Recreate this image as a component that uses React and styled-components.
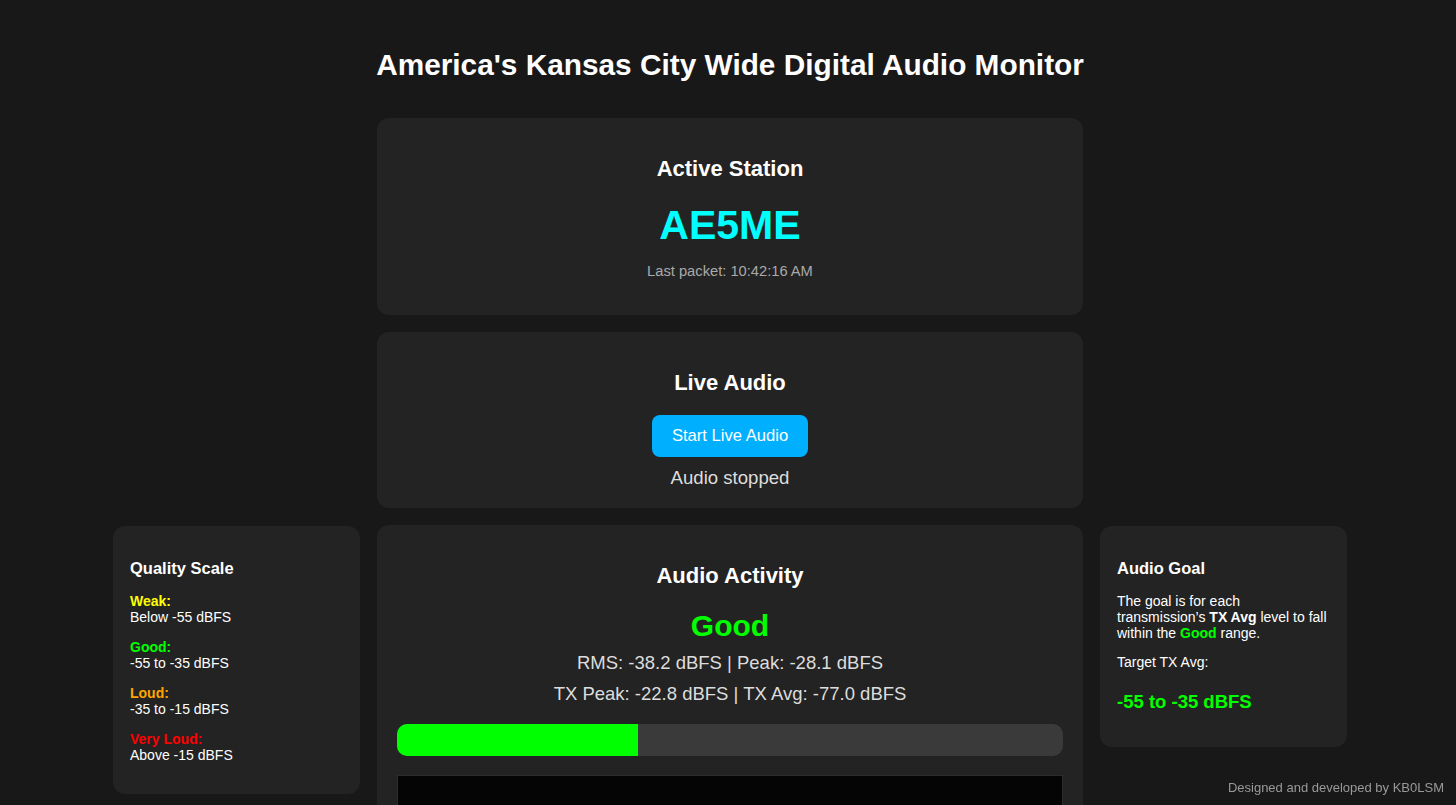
import React from "react";
import styled, { createGlobalStyle } from "styled-components";

const GlobalStyle = createGlobalStyle`
    body {
        margin: 0;
        background-color: #181818;
        color: #ffffff;
        font-family: "Liberation Sans", Arial, sans-serif;
    }
`;

const Page = styled.div`
    padding: 47px 0 40px 4px;
`;

const PageTitle = styled.h1`
    font-size: 29.8px;
    line-height: 35px;
    margin: 0 0 36px;
    text-align: center;
    color: #ffffff;
`;

const TopColumn = styled.div`
    width: 706px;
    margin: 0 auto;
    display: flex;
    flex-direction: column;
    gap: 17px;
`;

const BottomRow = styled.div`
    display: grid;
    grid-template-columns: 247px 706px 247px;
    column-gap: 17px;
    justify-content: center;
    align-items: start;
    margin-top: 17px;
`;

const SidePanel = styled.div`
    margin-top: 1px;
    background-color: #232323;
    border-radius: 12px;
    padding: 17px 17px ${props => props.side === "left" ? "16px" : "20px"};
    font-size: 14px;
    line-height: 16px;
`;

const Card = styled.div`
    background-color: #232323;
    border-radius: 12px;
    padding: 20px;
    text-align: center;
`;

const CardTitle = styled.h2`
    font-size: 22px;
    line-height: 25px;
    margin: 18px 0 0;
`;

const Callsign = styled.div`
    font-size: 41px;
    line-height: 46px;
    font-weight: bold;
    color: #00ffff;
    margin-top: 21px;
`;

const LastPacket = styled.div`
    font-size: 14.7px;
    line-height: 16px;
    color: #aaaaaa;
    margin: 15px 0 16px;
`;

const AudioButton = styled.button`
    font-family: inherit;
    font-size: 16.6px;
    color: #ffffff;
    background-color: #00b0ff;
    border: none;
    border-radius: 8px;
    height: 42px;
    padding: 0 20px;
    margin-top: 20px;
    cursor: pointer;
`;

const StatusText = styled.div`
    font-size: 18.6px;
    line-height: 21px;
    color: #dddddd;
    margin-top: 10px;
`;

const Quality = styled.div`
    font-size: 30px;
    line-height: 37px;
    font-weight: bold;
    color: ${props => props.color};
    margin-top: 19px;
`;

const Reading = styled.div`
    font-size: 18.5px;
    line-height: 21px;
    color: #dddddd;
    margin-top: ${props => props.gap}px;
`;

const Meter = styled.div`
    height: 32px;
    margin-top: 20px;
    border-radius: 10px;
    background-color: #3a3a3a;
    overflow: hidden;
`;

const MeterFill = styled.div`
    height: 100%;
    background-color: #00ff00;
`;

const Scope = styled.div`
    height: 200px;
    margin-top: 19px;
    background-color: #050505;
    border: 1px solid #2c2c2c;
`;

const PanelTitle = styled.h3`
    font-size: 16.5px;
    line-height: 18px;
    margin: 16px 0 16px;
`;

const ScaleItem = styled.div`
    margin-bottom: ${props => props.last ? "15px" : "14px"};
`;

const ScaleLabel = styled.div`
    font-weight: bold;
    color: ${props => props.color};
`;

const GoalText = styled.p`
    margin: 0 0 13px;
`;

const Highlight = styled.strong`
    color: ${props => props.color || "#ffffff"};
`;

const GoalRange = styled.div`
    font-size: 18.5px;
    line-height: 21px;
    font-weight: bold;
    color: #00ff00;
    margin: 21px 0 15px;
`;

const Footer = styled.div`
    position: fixed;
    right: 12px;
    bottom: 10px;
    font-size: 13px;
    color: #999999;
`;

const scale = [
    { label: "Weak:", range: "Below -55 dBFS", color: "#ffff00" },
    { label: "Good:", range: "-55 to -35 dBFS", color: "#00ff00" },
    { label: "Loud:", range: "-35 to -15 dBFS", color: "#ffa500" },
    { label: "Very Loud:", range: "Above -15 dBFS", color: "#ff0000" },
];

const level = { rms: -38.2, peak: -28.1, txPeak: -22.8, txAvg: -77.0 };

function App() {
    const fill = Math.max(0, Math.min(100, (level.rms + 100) * 0.586));

    return (
        <Page>
            <GlobalStyle />
            <PageTitle>America's Kansas City Wide Digital Audio Monitor</PageTitle>
            <TopColumn>
                <Card>
                    <CardTitle>Active Station</CardTitle>
                    <Callsign>AE5ME</Callsign>
                    <LastPacket>Last packet: 10:42:16 AM</LastPacket>
                </Card>
                <Card>
                    <CardTitle>Live Audio</CardTitle>
                    <AudioButton>Start Live Audio</AudioButton>
                    <StatusText>Audio stopped</StatusText>
                </Card>
            </TopColumn>
            <BottomRow>
                <SidePanel side="left">
                    <PanelTitle>Quality Scale</PanelTitle>
                    {scale.map((item, i) => (
                        <ScaleItem key={item.label} last={i === scale.length - 1}>
                            <ScaleLabel color={item.color}>{item.label}</ScaleLabel>
                            <div>{item.range}</div>
                        </ScaleItem>
                    ))}
                </SidePanel>
                <Card>
                    <CardTitle>Audio Activity</CardTitle>
                    <Quality color="#00ff00">Good</Quality>
                    <Reading gap={8}>RMS: {level.rms.toFixed(1)} dBFS | Peak: {level.peak.toFixed(1)} dBFS</Reading>
                    <Reading gap={10}>TX Peak: {level.txPeak.toFixed(1)} dBFS | TX Avg: {level.txAvg.toFixed(1)} dBFS</Reading>
                    <Meter>
                        <MeterFill style={{ width: `${fill}%` }} />
                    </Meter>
                    <Scope />
                </Card>
                <SidePanel side="right">
                    <PanelTitle>Audio Goal</PanelTitle>
                    <GoalText>
                        The goal is for each transmission’s <Highlight>TX Avg</Highlight> level to fall within the <Highlight color="#00ff00">Good</Highlight> range.
                    </GoalText>
                    <GoalText>Target TX Avg:</GoalText>
                    <GoalRange>-55 to -35 dBFS</GoalRange>
                </SidePanel>
            </BottomRow>
            <Footer>Designed and developed by KB0LSM</Footer>
        </Page>
    );
}

export default App;
